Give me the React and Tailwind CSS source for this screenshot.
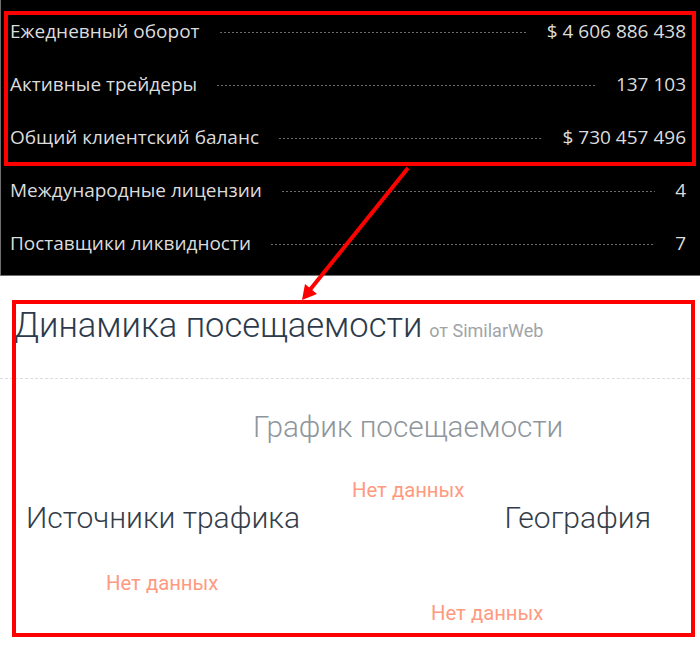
import React from 'react';

const stats = [
  { label: 'Ежедневный оборот', value: '$ 4 606 886 438' },
  { label: 'Активные трейдеры', value: '137 103' },
  { label: 'Общий клиентский баланс', value: '$ 730 457 496' },
  { label: 'Международные лицензии', value: '4' },
  { label: 'Поставщики ликвидности', value: '7' },
];

function StatRow({ label, value }) {
  return (
    <div className="flex h-[53px] items-center pl-[9px] pr-[14px]">
      <span className="whitespace-nowrap">{label}</span>
      <div className="mx-[20px] mt-[2px] h-px flex-1 bg-[linear-gradient(to_right,#6b6b6b_50%,transparent_50%)] bg-[length:4px_1px]" />
      <span className="whitespace-nowrap">{value}</span>
    </div>
  );
}

function Annotations() {
  return (
    <>
      <div className="pointer-events-none absolute left-[4px] top-[11px] h-[155px] w-[692px] border-4 border-[#ff0000]" />
      <div className="pointer-events-none absolute left-[12px] top-[300px] h-[337px] w-[683px] border-4 border-[#ff0000]" />
      <svg className="pointer-events-none absolute left-0 top-0" width="700" height="653">
        <line x1="408" y1="168" x2="309" y2="291" stroke="#ff0000" strokeWidth="4" />
        <polygon points="302,300 317,294 305,284" fill="#ff0000" />
      </svg>
    </>
  );
}

export default function App() {
  return (
    <div className="relative h-[653px] w-[700px] overflow-hidden bg-white">
      {/* Stats panel */}
      <div className="h-[276px] border-b border-l border-[#6f6f6f] bg-black py-[5px] font-['Open_Sans',sans-serif] text-[19px] text-[#dcdcdc]">
        {stats.map((s) => (
          <StatRow key={s.label} {...s} />
        ))}
      </div>

      {/* Traffic section */}
      <div className="font-['Roboto',sans-serif] font-light">
        <div className="mt-[32px] flex h-[34px] items-baseline pl-[14px] leading-[34px]">
          <span className="text-[34.5px] text-[#2c3a4b]">Динамика посещаемости</span>
          <span className="ml-[7px] text-[18px] font-normal text-[#a0a4a8]">от SimilarWeb</span>
        </div>

        <div className="mt-[36px] border-t border-dashed border-[#d6dee3]" />

        <div className="mt-[33px] h-[30px] pl-[253px] text-[29.7px] leading-[30px] text-[#8e969c]">
          График посещаемости
        </div>

        <div className="mt-[38px] h-[20px] pl-[352px] text-[20.3px] font-normal leading-[20px] text-[#ff9a80]">
          Нет данных
        </div>

        <div className="mt-[3px] flex h-[30px] items-center justify-between pl-[26px] pr-[49px] text-[30px] leading-[30px] text-[#333d49]">
          <span>Источники трафика</span>
          <span>География</span>
        </div>

        <div className="mt-[40px] h-[20px] pl-[106px] text-[20.3px] font-normal leading-[20px] text-[#ff9a80]">
          Нет данных
        </div>

        <div className="mt-[10px] h-[20px] pl-[431px] text-[20.3px] font-normal leading-[20px] text-[#ff9a80]">
          Нет данных
        </div>
      </div>

      <Annotations />
    </div>
  );
}
